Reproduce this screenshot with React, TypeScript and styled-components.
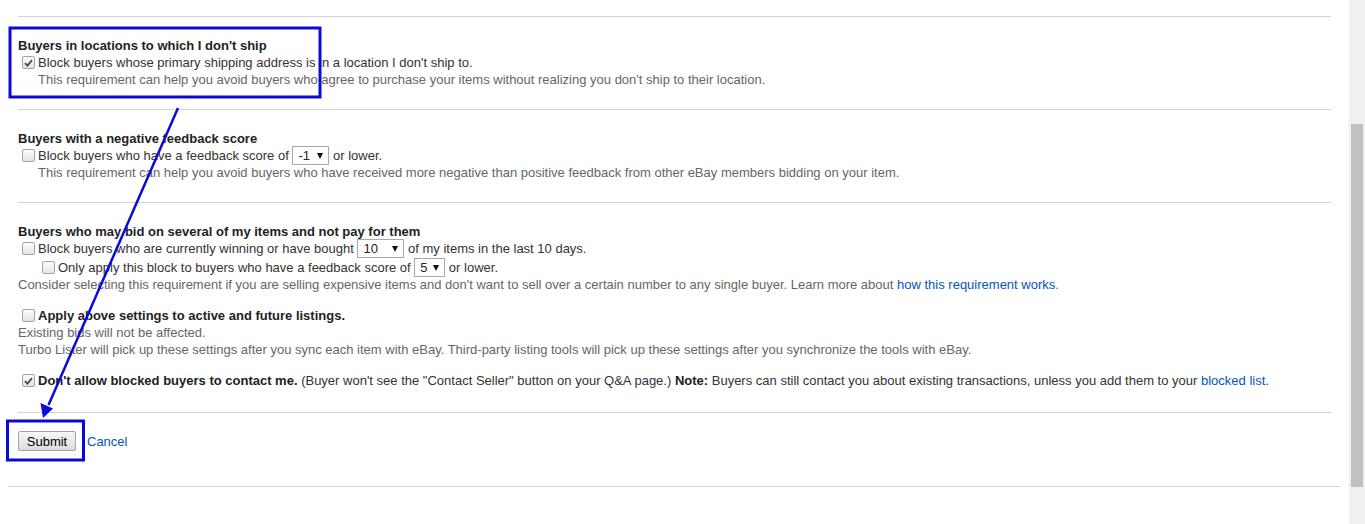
import React from 'react';
import styled, { createGlobalStyle } from 'styled-components';

const GlobalStyle = createGlobalStyle`
  html, body { margin: 0; padding: 0; height: 524px; overflow: hidden; background: #fff; }
  body { font-family: "Liberation Sans", Arial, sans-serif; font-size: 13px; color: #333; }
  * { box-sizing: border-box; }
`;

const Viewport = styled.div`
  position: relative;
  display: flex;
  height: 524px;
`;

const Page = styled.div`
  flex: 1;
  padding: 16px 8px 0;
`;

const Form = styled.div`
  margin: 0 10px;
`;

const Section = styled.section<{ $pt?: number; $pb?: number }>`
  border-top: 1px solid #d3d3d3;
  padding: ${p => p.$pt ?? 20}px 0 ${p => p.$pb ?? 21}px;
`;

const Heading = styled.div`
  font-weight: bold;
  line-height: 17px;
  color: #222;
`;

const Row = styled.div<{ $indent?: number; $mt?: number }>`
  height: 17px;
  line-height: 17px;
  white-space: nowrap;
  padding-left: ${p => p.$indent ?? 0}px;
  margin-top: ${p => p.$mt ?? 0}px;
  color: #333;
`;

const Desc = styled.div<{ $indent?: number; $mt?: number }>`
  line-height: 17px;
  height: 17px;
  white-space: nowrap;
  color: #666;
  padding-left: ${p => p.$indent ?? 0}px;
  margin-top: ${p => p.$mt ?? 0}px;
`;

const Box = styled.span<{ $checked?: boolean }>`
  display: inline-flex;
  align-items: center;
  justify-content: center;
  width: 13px;
  height: 13px;
  margin: 0 3px 0 4px;
  vertical-align: middle;
  position: relative;
  top: -1px;
  border: 1px solid #a4a4a4;
  border-radius: 2px;
  background: linear-gradient(#fdfdfd, #e4e4e4);
`;

const Bold = styled.b`
  font-weight: bold;
  color: #222;
`;

const Link = styled.a`
  color: #0654ba;
  text-decoration: none;
  cursor: pointer;
`;

const SelectBox = styled.span<{ $w: number }>`
  display: inline-flex;
  align-items: center;
  justify-content: space-between;
  width: ${p => p.$w}px;
  height: 19px;
  padding: 0 5px 0 5px;
  margin: 0;
  vertical-align: middle;
  position: relative;
  top: -1px;
  border: 1px solid #a9a9a9;
  background: #fff;
  color: #222;
  line-height: 17px;
`;

const Caret = styled.span`
  width: 0;
  height: 0;
  border-left: 3.5px solid transparent;
  border-right: 3.5px solid transparent;
  border-top: 6px solid #111;
`;

const Block = styled.div<{ $mt?: number }>`
  margin-top: ${p => p.$mt ?? 0}px;
`;

const Actions = styled.div`
  display: flex;
  align-items: center;
  gap: 11px;
`;

const Button = styled.button`
  height: 20px;
  width: 58px;
  padding: 0;
  font-family: "Liberation Sans", Arial, sans-serif;
  font-size: 13px;
  color: #000;
  border: 1px solid #a5a5a5;
  border-radius: 2px;
  background: linear-gradient(#f7f7f7, #dcdcdc);
`;

const BottomRule = styled.div`
  border-top: 1px solid #d3d3d3;
`;

const ScrollTrack = styled.div`
  width: 16px;
  height: 524px;
  background: #f0f0f0;
  padding: 124px 2px 0;
`;

const ScrollThumb = styled.div`
  height: 363px;
  background: #c1c1c1;
`;

const Overlay = styled.svg`
  position: absolute;
  left: 0;
  top: 0;
  pointer-events: none;
`;

const Check: React.FC<{ checked?: boolean }> = ({ checked }) => (
  <Box $checked={checked}>
    {checked && (
      <svg width="9" height="8" viewBox="0 0 9 8">
        <path d="M1 4.2 L3.4 6.6 L8 1.2" fill="none" stroke="#4a4a4a" strokeWidth="1.8" />
      </svg>
    )}
  </Box>
);

const Select: React.FC<{ value: string; w: number }> = ({ value, w }) => (
  <SelectBox $w={w}>
    <span>{value}</span>
    <Caret />
  </SelectBox>
);

export default function App() {
  return (
    <>
      <GlobalStyle />
      <Viewport>
        <Page>
          <Form>
            <Section>
              <Heading>Buyers in locations to which I don't ship</Heading>
              <Row>
                <Check checked />
                Block buyers whose primary shipping address is in a location I don't ship to.
              </Row>
              <Desc $indent={20}>
                This requirement can help you avoid buyers who agree to purchase your items without realizing you don't ship to their location.
              </Desc>
            </Section>
            <Section>
              <Heading>Buyers with a negative feedback score</Heading>
              <Row>
                <Check />
                Block buyers who have a feedback score of <Select value="-1" w={37} /> or lower.
              </Row>
              <Desc $indent={20}>
                This requirement can help you avoid buyers who have received more negative than positive feedback from other eBay members bidding on your item.
              </Desc>
            </Section>
            <Section $pb={23}>
              <Heading>Buyers who may bid on several of my items and not pay for them</Heading>
              <Row>
                <Check />
                Block buyers who are currently winning or have bought <Select value="10" w={47} /> of my items in the last 10 days.
              </Row>
              <Row $indent={20} $mt={2}>
                <Check />
                Only apply this block to buyers who have a feedback score of <Select value="5" w={31} /> or lower.
              </Row>
              <Desc>
                Consider selecting this requirement if you are selling expensive items and don't want to sell over a certain number to any single buyer. Learn more about{' '}
                <Link>how this requirement works</Link>.
              </Desc>
              <Block $mt={14}>
                <Row>
                  <Check />
                  <Bold>Apply above settings to active and future listings.</Bold>
                </Row>
                <Desc>Existing bids will not be affected.</Desc>
                <Desc>
                  Turbo Lister will pick up these settings after you sync each item with eBay. Third-party listing tools will pick up these settings after you synchronize the tools with eBay.
                </Desc>
              </Block>
              <Block $mt={14}>
                <Row>
                  <Check checked />
                  <Bold>Don't allow blocked buyers to contact me.</Bold> (Buyer won't see the "Contact Seller" button on your Q&amp;A page.) <Bold>Note:</Bold> Buyers can still contact you about existing transactions, unless you add them to your{' '}
                  <Link>blocked list</Link>.
                </Row>
              </Block>
            </Section>
            <Section $pt={18} $pb={35}>
              <Actions>
                <Button>Submit</Button>
                <Link>Cancel</Link>
              </Actions>
            </Section>
          </Form>
          <BottomRule />
        </Page>
        <ScrollTrack>
          <ScrollThumb />
        </ScrollTrack>
        <Overlay width="1349" height="524" viewBox="0 0 1349 524">
          <rect x="10" y="28" width="310" height="69" fill="none" stroke="#0a0ad8" strokeWidth="3" />
          <rect x="7.5" y="421" width="76" height="39" fill="none" stroke="#0a0ad8" strokeWidth="3" />
          <line x1="178" y1="108" x2="48.5" y2="405" stroke="#0a0ad8" strokeWidth="2.5" />
          <polygon points="43,418 40.5,403 53,408.5" fill="#0a0ad8" />
        </Overlay>
      </Viewport>
    </>
  );
}
